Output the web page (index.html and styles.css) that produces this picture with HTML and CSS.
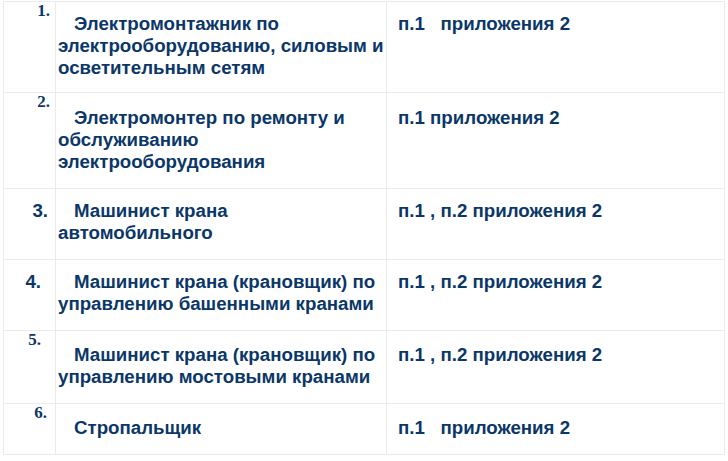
FILE: index.html
```html
<!DOCTYPE html>
<html lang="ru">
<head>
<meta charset="utf-8">
<title>Профессии</title>
<link rel="stylesheet" href="styles.css">
</head>
<body>
<table class="prof">
  <colgroup>
    <col class="c-num">
    <col class="c-name">
    <col class="c-ref">
  </colgroup>
  <tr class="first">
    <td class="num serif pr5">1.</td>
    <td class="name">Электромонтажник по<br>электрооборудованию, силовым и<br>осветительным сетям</td>
    <td class="ref">п.1&nbsp;&nbsp; приложения 2</td>
  </tr>
  <tr class="tall">
    <td class="num serif pr5">2.</td>
    <td class="name">Электромонтер по ремонту и<br>обслуживанию<br>электрооборудования</td>
    <td class="ref">п.1 приложения 2</td>
  </tr>
  <tr>
    <td class="num sans pr7">3.</td>
    <td class="name">Машинист крана<br>автомобильного</td>
    <td class="ref">п.1 , п.2 приложения 2</td>
  </tr>
  <tr>
    <td class="num sans pr14">4.</td>
    <td class="name">Машинист крана (крановщик) по<br>управлению башенными кранами</td>
    <td class="ref">п.1 , п.2 приложения 2</td>
  </tr>
  <tr class="mid">
    <td class="num serif pr14">5.</td>
    <td class="name">Машинист крана (крановщик) по<br>управлению мостовыми кранами</td>
    <td class="ref">п.1 , п.2 приложения 2</td>
  </tr>
  <tr class="mid">
    <td class="num serif pr8">6.</td>
    <td class="name">Стропальщик</td>
    <td class="ref">п.1&nbsp;&nbsp; приложения 2</td>
  </tr>
</table>
</body>
</html>
```
FILE: styles.css
```css
html, body {
  margin: 0;
  padding: 0;
  background: #ffffff;
}

body {
  padding: 1px 0 0 3px;
  font-family: "Liberation Sans", Arial, sans-serif;
  color: #0b3768;
}

.prof {
  border-collapse: collapse;
  table-layout: fixed;
  width: 721px;
}

.c-num { width: 52px; }
.c-name { width: 331px; }
.c-ref { width: 338px; }

.prof td {
  border: 1px solid #ebebeb;
  vertical-align: top;
  font-weight: bold;
  font-size: 18.7px;
  line-height: 22px;
  padding: 11px 2px 15px 2px;
  white-space: nowrap;
}

.prof .first td {
  padding-bottom: 13px;
}

.prof .tall td {
  padding-top: 14px;
}

.prof .mid td {
  padding-top: 13px;
}

.prof td.name {
  text-indent: 16px;
  padding-right: 0;
}

.prof td.ref {
  padding-left: 11px;
}

.prof td.num {
  text-align: right;
}

.prof td.serif {
  font-family: "Liberation Serif", "Times New Roman", serif;
  font-size: 17px;
  line-height: 18px;
  padding-top: 0;
}

.prof .tall td.serif,
.prof .mid td.serif {
  padding-top: 0;
}

.pr5 { padding-right: 5px !important; }
.pr7 { padding-right: 7px !important; }
.pr8 { padding-right: 8px !important; }
.pr14 { padding-right: 14px !important; }
```
